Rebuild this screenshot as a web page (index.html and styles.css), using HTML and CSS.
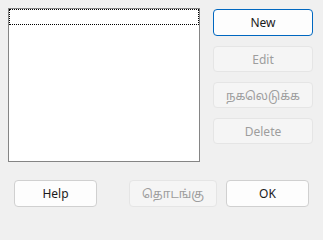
FILE: index.html
```html
<!DOCTYPE html>
<html>
<head>
<meta charset="utf-8">
<link rel="stylesheet" href="styles.css">
</head>
<body>
<div class="dialog">
  <div class="top">
    <div class="list">
      <div class="focus-row"></div>
    </div>
    <div class="side">
      <button class="btn default">New</button>
      <button class="btn disabled">Edit</button>
      <button class="btn disabled">நகலெடுக்க</button>
      <button class="btn disabled">Delete</button>
    </div>
  </div>
  <div class="bottom">
    <button class="btn help">Help</button>
    <button class="btn disabled start">தொடங்கு</button>
    <button class="btn ok">OK</button>
  </div>
</div>
</body>
</html>
```

FILE: styles.css
```css
html, body {
  margin: 0;
  padding: 0;
  background: #f0f0f0;
}
body {
  width: 323px;
  height: 222px;
  overflow: hidden;
  font-family: "Noto Sans", "Noto Sans Tamil", "Liberation Sans", sans-serif;
  font-size: 12px;
}
.dialog {
  padding: 8px 0 0 8px;
  display: flex;
  flex-direction: column;
}
.top {
  display: flex;
  align-items: flex-start;
}
.list {
  width: 190px;
  height: 152px;
  background: #ffffff;
  border: 1px solid #858585;
  padding: 0;
}
.focus-row {
  margin: 0;
  height: 14px;
  border: 1px dotted #000;
}
.side {
  margin-left: 13px;
  padding-top: 1px;
  display: flex;
  flex-direction: column;
  gap: 10px;
}
.btn {
  font-family: inherit;
  font-size: 12px;
  box-sizing: border-box;
  height: 27px;
  width: 100px;
  padding: 0;
  background: #fdfdfd;
  border: 1px solid #d0d0d0;
  border-radius: 4px;
  color: #1b1b1b;
  display: flex;
  align-items: center;
  justify-content: center;
}
.side .btn {
  height: 26px;
}
.btn.default {
  border: 1px solid #0067c0;
  height: 27px;
}
.btn.disabled {
  background: #f5f5f5;
  border-color: #e5e5e5;
  color: #9d9d9d;
}
.bottom {
  display: flex;
  margin-top: 18px;
  margin-left: 6px;
}
.help {
  width: 83px;
}
.start {
  width: 88px;
  margin-left: 32px;
}
.ok {
  width: 83px;
  margin-left: 9px;
}
```
